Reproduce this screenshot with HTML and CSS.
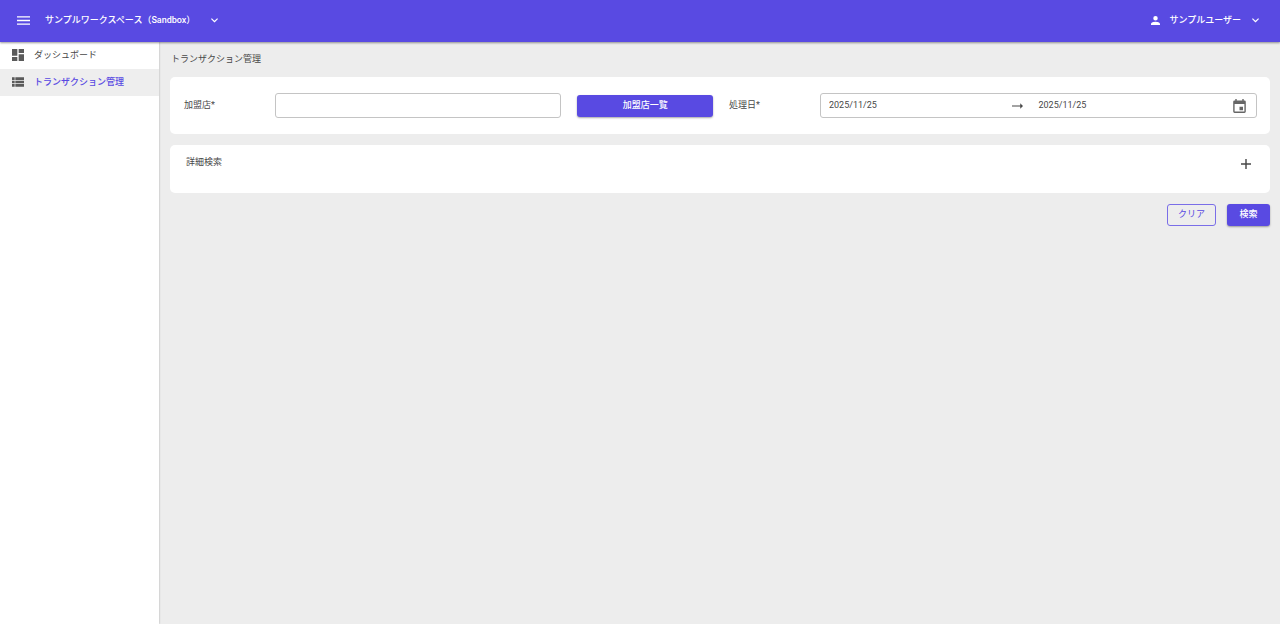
FILE: index.html
```html
<!DOCTYPE html>
<html lang="ja">
<head>
<meta charset="utf-8">
<meta name="viewport" content="width=device-width, initial-scale=1">
<title>トランザクション管理</title>
<link rel="stylesheet" href="styles.css">
</head>
<body>
<header class="topbar">
  <button class="menu-button" type="button" aria-label="メニュー">
    <svg class="icon-menu" viewBox="0 0 18 12"><path d="M0 12h18v-2H0v2zm0-5h18V5H0v2zm0-7v2h18V0H0z"/></svg>
  </button>
  <button class="topbar-button" type="button">
    <span>サンプルワークスペース（Sandbox）</span>
    <svg class="icon-chevron" viewBox="0 0 12 8"><path d="M1.4 0 6 4.6 10.6 0 12 1.4l-6 6-6-6z"/></svg>
  </button>
  <button class="topbar-button user" type="button">
    <svg class="icon-user" viewBox="0 0 16 16"><path d="M8 8a4 4 0 1 0 0-8 4 4 0 0 0 0 8zm0 2c-2.700 0-8 1.300-8 4v2h16v-2c0-2.700-5.300-4-8-4z"/></svg>
    <span>サンプルユーザー</span>
    <svg class="icon-chevron" viewBox="0 0 12 8"><path d="M1.4 0 6 4.6 10.6 0 12 1.4l-6 6-6-6z"/></svg>
  </button>
</header>
<div class="layout">
  <nav class="sidebar">
    <a class="nav-item" href="#">
      <svg class="nav-icon" viewBox="3 3 18 18"><path d="M3 13h8V3H3v10zm0 8h8v-6H3v6zm10 0h8V11h-8v10zm0-18v6h8V3h-8z"/></svg>
      <span>ダッシュボード</span>
    </a>
    <a class="nav-item active" href="#" aria-current="page">
      <svg class="nav-icon" viewBox="3 3 18 18"><path d="M3 14h4v-4H3v4zm0 5h4v-4H3v4zM3 9h4V5H3v4zm5 5h13v-4H8v4zm0 5h13v-4H8v4zM8 5v4h13V5H8z"/></svg>
      <span>トランザクション管理</span>
    </a>
  </nav>
  <main class="content">
    <h1 class="page-title">トランザクション管理</h1>
    <form class="search">
      <section class="card fields">
        <label class="label" for="merchant">加盟店*</label>
        <input class="box" id="merchant" type="text">
        <button class="button primary" type="button">加盟店一覧</button>
        <label class="label" for="date-from">処理日*</label>
        <div class="box date-range">
          <input class="date" id="date-from" type="text" value="2025/11/25">
          <svg class="icon-arrow" viewBox="0 0 12 6"><path d="M0 2.400h9V0l3 3-3 3V3.600H0z"/></svg>
          <input class="date" type="text" value="2025/11/25" aria-label="処理日（終了）">
          <button class="calendar-button" type="button" aria-label="カレンダー">
            <svg class="icon-calendar" viewBox="3 1 18 20"><path d="M17 12h-5v5h5v-5zM16 1v2H8V1H6v2H5a2 2 0 0 0-2 2v14a2 2 0 0 0 2 2h14a2 2 0 0 0 2-2V5a2 2 0 0 0-2-2h-1V1h-2zm3 18H5V8h14v11z"/></svg>
          </button>
        </div>
      </section>
      <section class="card details">
        <h2 class="details-title">詳細検索</h2>
        <button class="expand-button" type="button" aria-label="開く">
          <svg class="icon-plus" viewBox="0 0 14 14"><path d="M14 8H8v6H6V8H0V6h6V0h2v6h6z"/></svg>
        </button>
      </section>
      <div class="actions">
        <button class="button outlined" type="reset">クリア</button>
        <button class="button primary" type="button">検索</button>
      </div>
    </form>
  </main>
</div>
</body>
</html>
```
FILE: styles.css
```css
* {
  box-sizing: border-box;
}

body {
  display: flex;
  flex-direction: column;
  min-height: 100vh;
  margin: 0;
  background: #ededed;
  color: #484848;
  font: 9px/16px Roboto, "Noto Sans CJK JP", sans-serif;
}

button,
input {
  margin: 0;
  padding: 0;
  border: 0;
  background: none;
  color: inherit;
  font: inherit;
}

button {
  cursor: pointer;
}

svg {
  display: block;
  flex: none;
  fill: currentColor;
}

.topbar {
  position: relative;
  display: flex;
  align-items: center;
  height: 42px;
  padding: 0 21px 2px 17px;
  background: #594ae2;
  color: #fff;
  font-weight: 500;
  box-shadow: 0 1px 2px rgba(0, 0, 0, 0.4);
}

.menu-button {
  margin-right: 15px;
}

.topbar-button {
  display: flex;
  align-items: center;
  gap: 16px;
}

.user {
  margin-left: auto;
  gap: 9px;
}

.icon-menu {
  width: 13px;
  height: 9px;
}

.icon-chevron {
  width: 7px;
  height: 5px;
}

.user .icon-chevron {
  margin-left: 2px;
}

.icon-user {
  width: 9px;
  height: 9px;
}

.layout {
  display: flex;
  flex: 1;
}

.sidebar {
  flex: none;
  width: 159px;
  margin-right: 1px;
  background: #fff;
  box-shadow: 0 0 2px rgba(0, 0, 0, 0.3);
}

.nav-item {
  display: flex;
  align-items: center;
  gap: 10px;
  height: 27px;
  padding: 0 12px 1px;
  color: #484848;
  text-decoration: none;
}

.nav-icon {
  width: 12px;
  height: 12px;
  color: #5a5a5a;
}

.active {
  background: #eee;
  color: #594ae2;
  font-weight: 500;
}

.content {
  flex: 1;
  padding: 9px 10px;
}

.page-title,
.details-title {
  margin: 0;
  font-size: inherit;
  font-weight: 400;
}

.page-title {
  padding-left: 1px;
}

.search {
  display: flex;
  flex-direction: column;
  gap: 11px;
  margin-top: 10px;
}

.card {
  border-radius: 5px;
  background: #fff;
}

.fields {
  display: grid;
  grid-template-columns: 75px 19fr 9fr 75px 29fr;
  column-gap: 16px;
  align-items: center;
  padding: 16px 13px 16px 14px;
}

.label {
  padding-bottom: 2px;
}

.box {
  min-width: 0;
  height: 25px;
  border: 1px solid #c4c4c4;
  border-radius: 3px;
}

.date-range {
  display: flex;
  align-items: center;
  padding: 0 10px 0 8px;
}

.date {
  flex: 1;
  min-width: 0;
  padding-bottom: 2px;
}

.date:first-child {
  flex: none;
  width: 44%;
}

.icon-arrow {
  width: 11px;
  height: 6px;
  margin-right: 15px;
}

.icon-calendar {
  width: 13px;
  height: 14px;
  color: #666;
}

.button {
  height: 22px;
  padding: 0 10px 2px;
  border-radius: 3px;
  font-weight: 500;
}

.primary {
  background: #594ae2;
  color: #fff;
  box-shadow: 0 1px 2px rgba(0, 0, 0, 0.35);
}

.outlined {
  border: 1px solid #7a6ee8;
  color: #594ae2;
  font-weight: 400;
}

.details {
  display: flex;
  align-items: flex-start;
  justify-content: space-between;
  padding: 9px 19px 23px 16px;
}

.expand-button {
  margin-top: 5px;
}

.icon-plus {
  width: 10px;
  height: 10px;
}

.actions {
  display: flex;
  justify-content: flex-end;
  gap: 11px;
}

.actions .button {
  min-width: 43px;
}
```
